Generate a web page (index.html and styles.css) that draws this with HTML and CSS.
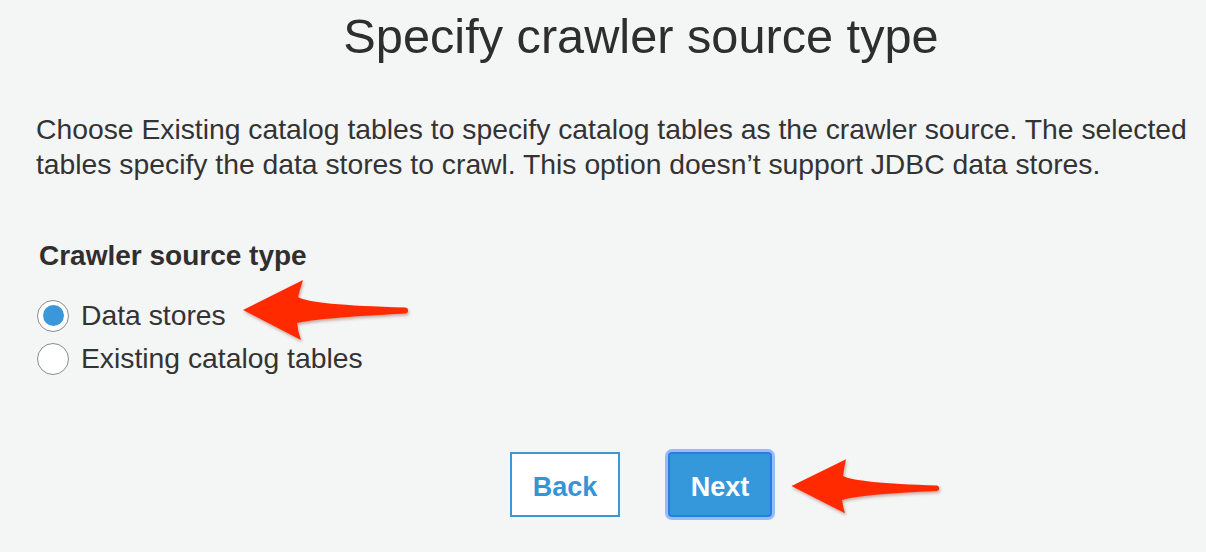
FILE: index.html
```html
<!DOCTYPE html>
<html lang="en">
<head>
<meta charset="utf-8">
<title>Specify crawler source type</title>
<link rel="stylesheet" href="styles.css">
</head>
<body>
<main class="page">
  <h1 class="title">Specify crawler source type</h1>
  <p class="intro">Choose Existing catalog tables to specify catalog tables as the crawler source. The selected tables specify the data stores to crawl. This option doesn’t support JDBC data stores.</p>
  <section class="field">
    <h2 class="field-label">Crawler source type</h2>
    <label class="option"><input class="radio" type="radio" name="src" checked><span>Data stores</span></label>
    <label class="option"><input class="radio" type="radio" name="src"><span>Existing catalog tables</span></label>
  </section>
  <div class="actions">
    <button class="btn btn-back" type="button">Back</button>
    <button class="btn btn-next" type="button">Next</button>
  </div>
</main>

<svg class="arrow arrow-one" viewBox="0 0 180 75" width="180" height="75" aria-hidden="true">
  <path d="M8,38 L68,8 Q65,17 63,25 Q76,33 170,35.5 A3,3 0 0 1 170,41.5 Q82,46 62,51 Q63,60 66,68 Z"/>
</svg>
<svg class="arrow arrow-two" viewBox="0 0 160 68" width="160" height="68" aria-hidden="true">
  <path d="M6.5,34 L61,7.3 Q59,16 58,24 Q71,31 152,33.5 A2.8,2.8 0 0 1 152,39 Q76,42 57,48 Q58,55 60,61.3 Z"/>
</svg>
</body>
</html>
```

FILE: styles.css
```css
html, body {
  margin: 0;
  padding: 0;
}
body {
  background: #f4f5f5;
  color: #333333;
  font-family: "Liberation Sans", Arial, Helvetica, sans-serif;
  overflow: hidden;
  width: 1206px;
  height: 552px;
  position: relative;
}
.page {
  box-sizing: content-box;
  width: 1210px;
  padding-left: 36px;
}
.title {
  margin: 8px 0 0;
  font-size: 48.7px;
  line-height: 56px;
  font-weight: 400;
  text-align: center;
  color: #2e2e2e;
}
.intro {
  margin: 48px 0 0;
  font-size: 28.3px;
  line-height: 35px;
  color: #333333;
}
.field {
  margin: 57px 0 0 1px;
  display: flex;
  flex-direction: column;
}
.field-label {
  margin: 0 0 21px;
  padding-left: 2px;
  font-size: 28px;
  line-height: 34px;
  font-weight: 700;
  color: #2f2f2f;
}
.option {
  display: flex;
  align-items: center;
  gap: 12px;
  height: 43px;
  font-size: 28.3px;
  color: #333333;
}
.radio {
  appearance: none;
  -webkit-appearance: none;
  margin: 0;
  width: 32px;
  height: 32px;
  border: 1.5px solid #8c8c8c;
  border-radius: 50%;
  background: #ffffff;
  box-sizing: border-box;
  display: grid;
  place-items: center;
}
.radio:checked::after {
  content: "";
  width: 21px;
  height: 21px;
  border-radius: 50%;
  background: #3a98da;
}
.actions {
  margin-top: 72px;
  display: flex;
  justify-content: center;
  align-items: center;
  gap: 48px;
}
.btn {
  box-sizing: border-box;
  height: 65px;
  font-family: "Liberation Sans", Arial, Helvetica, sans-serif;
  font-size: 27px;
  font-weight: 700;
  padding: 5px 0 0;
  cursor: pointer;
}
.btn-back {
  width: 110px;
  background: #ffffff;
  border: 2px solid #3b97d5;
  color: #3594d6;
  border-radius: 0;
}
.btn-next {
  width: 104px;
  background: #3598db;
  border: 2px solid #2c7ce2;
  color: #ffffff;
  border-radius: 4px;
  box-shadow: 0 0 0 3px rgba(120, 170, 245, 0.75);
}
.arrow {
  position: absolute;
  fill: #ff2a00;
  filter: drop-shadow(1px 2px 1.5px rgba(120, 20, 0, 0.35));
}
.arrow-one {
  left: 235px;
  top: 272px;
}
.arrow-two {
  left: 785px;
  top: 452px;
}
```
